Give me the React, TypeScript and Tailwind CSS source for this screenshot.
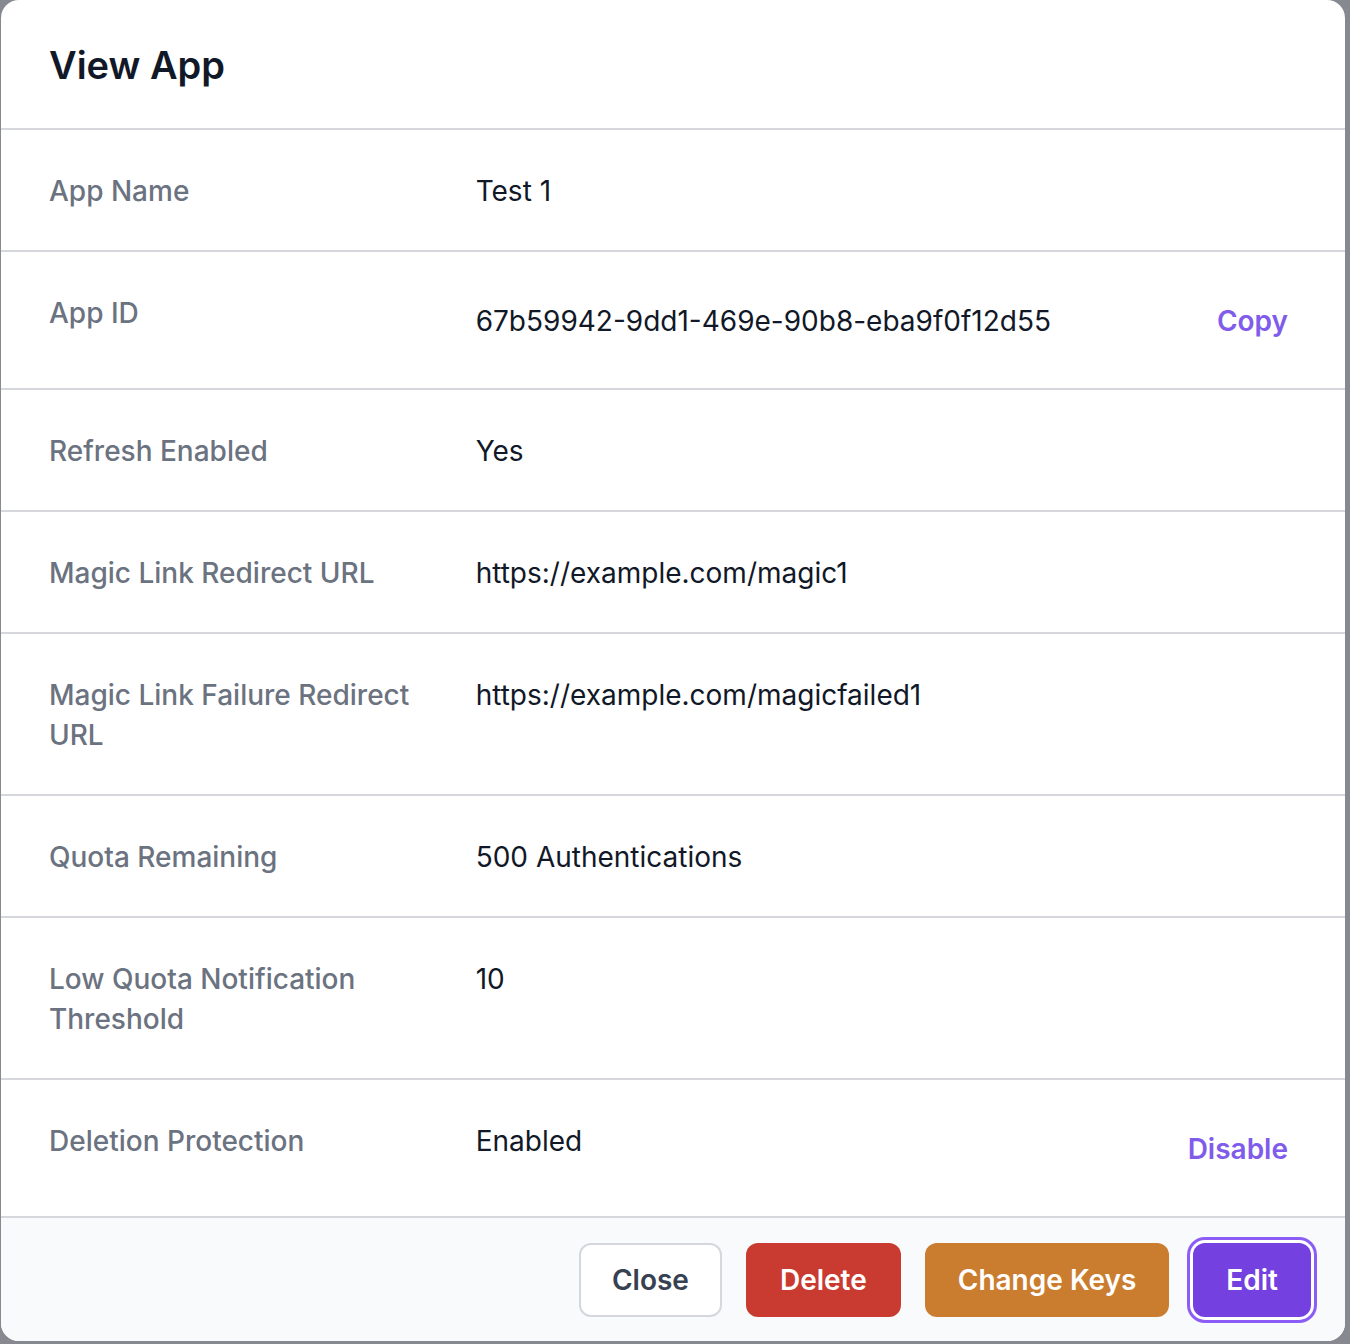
import React from 'react'

interface Row {
  label: string
  value: string
  action?: string
  center?: boolean
}

const rows: Row[] = [
  { label: 'App Name', value: 'Test 1' },
  { label: 'App ID', value: '67b59942-9dd1-469e-90b8-eba9f0f12d55', action: 'Copy', center: true },
  { label: 'Refresh Enabled', value: 'Yes' },
  { label: 'Magic Link Redirect URL', value: 'https://example.com/magic1' },
  { label: 'Magic Link Failure Redirect URL', value: 'https://example.com/magicfailed1' },
  { label: 'Quota Remaining', value: '500 Authentications' },
  { label: 'Low Quota Notification Threshold', value: '10' },
  { label: 'Deletion Protection', value: 'Enabled', action: 'Disable' },
]

export default function App() {
  return (
    <div
      className="w-[1350px] h-[1344px] bg-[#878991] pl-px overflow-hidden"
      style={{ fontFamily: 'Inter, "Noto Sans", sans-serif' }}
    >
      <div className="w-[1344px] bg-white rounded-[18px] overflow-hidden">
        {/* Header */}
        <div className="px-12 pt-[41px] pb-[39px] border-b-2 border-[#d5d7dc]">
          <h2 className="text-[38px] leading-[48px] font-semibold text-[#111827]">View App</h2>
        </div>

        {/* Details */}
        <dl>
          {rows.map(r => (
            <div
              key={r.label}
              className="grid grid-cols-3 gap-8 px-12 pt-[41px] pb-[39px] border-b-2 border-[#d5d7dc]"
            >
              <dt className="text-[28px] leading-[40px] font-medium text-[#6b7280]">{r.label}</dt>
              <dd
                className={
                  'col-span-2 flex justify-between text-[28px] leading-[40px] text-[#111827] ' +
                  (r.center ? 'items-center' : 'items-start')
                }
              >
                <span>{r.value}</span>
                {r.action && (
                  <button className="px-[9px] py-2 text-[28px] leading-[40px] font-semibold text-[#7f5ceb]">
                    {r.action}
                  </button>
                )}
              </dd>
            </div>
          ))}
        </dl>

        {/* Footer */}
        <div className="flex justify-end items-center gap-6 pl-8 pr-[34px] pt-[25px] pb-6 bg-[#f9fafb]">
          <button className="h-[74px] px-[31px] rounded-xl bg-white border-2 border-[#d5d7dc] text-[28px] font-semibold text-[#374151]">
            Close
          </button>
          <button className="h-[74px] px-[34px] rounded-xl bg-[#c93b31] text-[28px] font-semibold text-white">
            Delete
          </button>
          <button className="h-[74px] px-[33px] rounded-xl bg-[#cb7d2f] text-[28px] font-semibold text-white">
            Change Keys
          </button>
          <button className="h-[74px] px-[33px] rounded-xl bg-[#7540e0] text-[28px] font-semibold text-white ring-[3px] ring-[#8b5cf6] ring-offset-[3px] ring-offset-white">
            Edit
          </button>
        </div>
      </div>
    </div>
  )
}
